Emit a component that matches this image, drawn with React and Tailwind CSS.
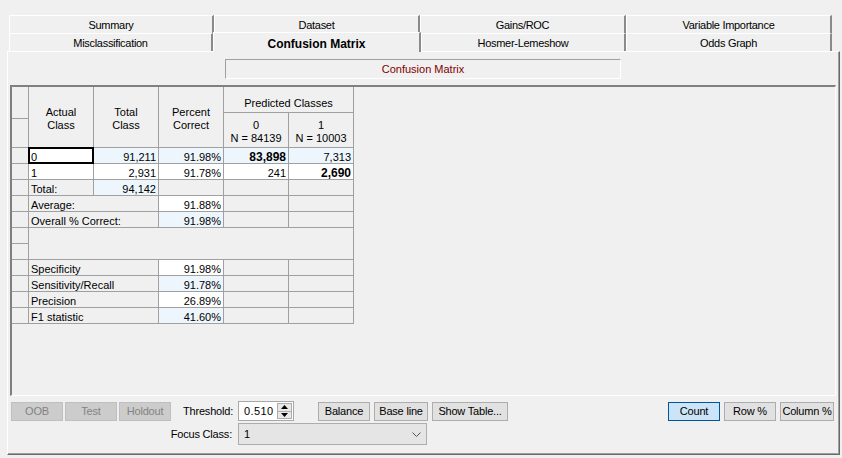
import React from 'react'

const TOP_TABS = [
    { label: 'Summary', w: 'w-[205px]' },
    { label: 'Dataset', w: 'w-[206px]' },
    { label: 'Gains/ROC', w: 'w-[206px]' },
    { label: 'Variable Importance', w: 'w-[206px]' },
]

function Tab({ label, w, active }) {
    return (
        <div
            className={`${w} flex items-center justify-center border-l border-t border-white border-r-2 border-r-[#8a8a8a] pt-[2px] text-[11px] tracking-[-0.3px] text-black ${
                active ? 'relative z-10 -mt-px h-[20px] bg-[#f0f0f0] font-bold tracking-normal text-[12px]' : 'h-[18px]'
            }`}
        >
            {label}
        </div>
    )
}

function Btn({ children, w, disabled, active }) {
    let look = 'bg-[#e1e1e1] border-[#adadad] text-black'
    if (disabled) look = 'bg-[#cccccc] border-[#bfbfbf] text-[#838383]'
    if (active) look = 'bg-[#cce4f7] border-[#005499] text-black'
    return (
        <div className={`${w} flex h-[19px] items-center justify-center border text-[11px] tracking-[-0.2px] ${look}`}>
            {children}
        </div>
    )
}

// grid cell: right + bottom lines, grid container supplies the outer edge
const cell = 'border-r border-b border-[#a0a0a0] flex items-center text-[11px] leading-[13px] overflow-hidden whitespace-nowrap'
const row = 'pt-[4px]'
const num = `${cell} ${row} justify-end pr-[2px]`
const lab = `${cell} ${row} pl-[2px]`
const blue = 'bg-[#eef6fd]'
const white = 'bg-white'

export default function App() {
    return (
        <div className="flex h-[458px] w-[842px] flex-col overflow-hidden bg-[#f0f0f0] font-['Liberation_Sans',Arial,sans-serif] text-black">
            {/* Tabs */}
            <div className="flex pl-[9px] pt-[15px]">
                {TOP_TABS.map(t => (
                    <Tab key={t.label} {...t} />
                ))}
            </div>
            <div className="flex h-[18px] items-start pl-[9px]">
                <Tab label="Misclassification" w="w-[204px]" />
                <Tab label="Confusion Matrix" w="w-[208px]" active />
                <Tab label="Hosmer-Lemeshow" w="w-[205px]" />
                <Tab label="Odds Graph" w="w-[206px]" />
            </div>

            {/* Tab page */}
            <div className="ml-[7px] flex h-[404px] w-[833px] flex-col border-l border-t border-white border-r border-b border-r-[#696969] border-b-[#696969] shadow-[inset_-1px_-1px_0_#a0a0a0]">
                <div className="ml-[217px] mt-[7px] flex h-[20px] w-[396px] items-center justify-center border-l border-t border-l-[#a0a0a0] border-t-[#a0a0a0] border-r border-b border-r-white border-b-white text-[11px] text-[#800000]">
                    Confusion Matrix
                </div>

                {/* Grid */}
                <div className="ml-[2px] mt-[6px] h-[311px] w-[826px] border-l-2 border-t-2 border-l-[#808080] border-t-[#808080] border-r border-b border-r-white border-b-white">
                    <div className="grid grid-cols-[17px_repeat(5,65px)] grid-rows-[26px_6px_29px_repeat(11,16px)] text-black">
                        {/* header */}
                        <div className={`${cell} col-start-1 row-start-1 row-span-2`} />
                        <div className={`${cell} col-start-1 row-start-3`} />
                        <div className={`${cell} col-start-2 row-start-1 row-span-3 justify-center pt-[4px] text-center`}>Actual<br />Class</div>
                        <div className={`${cell} col-start-3 row-start-1 row-span-3 justify-center pt-[4px] text-center`}>Total<br />Class</div>
                        <div className={`${cell} col-start-4 row-start-1 row-span-3 justify-center pt-[4px] text-center`}>Percent<br />Correct</div>
                        <div className={`${cell} col-start-5 col-span-2 row-start-1 justify-center pt-[7px]`}>Predicted Classes</div>
                        <div className={`${cell} col-start-5 row-start-2 row-span-2 justify-center pt-[4px] text-center`}>0<br />N = 84139</div>
                        <div className={`${cell} col-start-6 row-start-2 row-span-2 justify-center pt-[4px] text-center`}>1<br />N = 10003</div>

                        {/* class 0 */}
                        <div className={`${cell} col-start-1 row-start-4`} />
                        <div className="col-start-2 row-start-4 -ml-px -mt-px flex items-center border-2 border-black bg-white pl-[1px] pt-[3px] text-[11px] leading-[13px]">0</div>
                        <div className={`${num} ${blue} col-start-3 row-start-4`}>91,211</div>
                        <div className={`${num} ${blue} col-start-4 row-start-4`}>91.98%</div>
                        <div className={`${num} ${blue} col-start-5 row-start-4 font-bold text-[12px]`}>83,898</div>
                        <div className={`${num} ${blue} col-start-6 row-start-4`}>7,313</div>

                        {/* class 1 */}
                        <div className={`${cell} col-start-1 row-start-5`} />
                        <div className={`${lab} ${white} col-start-2 row-start-5`}>1</div>
                        <div className={`${num} ${white} col-start-3 row-start-5`}>2,931</div>
                        <div className={`${num} ${white} col-start-4 row-start-5`}>91.78%</div>
                        <div className={`${num} ${white} col-start-5 row-start-5`}>241</div>
                        <div className={`${num} ${white} col-start-6 row-start-5 font-bold text-[12px]`}>2,690</div>

                        {/* total */}
                        <div className={`${cell} col-start-1 row-start-6`} />
                        <div className={`${lab} col-start-2 row-start-6`}>Total:</div>
                        <div className={`${num} ${blue} col-start-3 row-start-6`}>94,142</div>
                        <div className={`${cell} col-start-4 row-start-6`} />
                        <div className={`${cell} col-start-5 row-start-6`} />
                        <div className={`${cell} col-start-6 row-start-6`} />

                        {/* average / overall */}
                        <div className={`${cell} col-start-1 row-start-7`} />
                        <div className={`${lab} col-start-2 col-span-2 row-start-7`}>Average:</div>
                        <div className={`${num} ${white} col-start-4 row-start-7`}>91.88%</div>
                        <div className={`${cell} col-start-5 row-start-7`} />
                        <div className={`${cell} col-start-6 row-start-7`} />

                        <div className={`${cell} col-start-1 row-start-8`} />
                        <div className={`${lab} col-start-2 col-span-2 row-start-8`}>Overall % Correct:</div>
                        <div className={`${num} ${blue} col-start-4 row-start-8`}>91.98%</div>
                        <div className={`${cell} col-start-5 row-start-8`} />
                        <div className={`${cell} col-start-6 row-start-8`} />

                        {/* spacer */}
                        <div className={`${cell} col-start-1 row-start-9`} />
                        <div className={`${cell} col-start-1 row-start-10`} />
                        <div className={`${cell} col-start-2 col-span-5 row-start-9 row-span-2`} />

                        {/* stats */}
                        {[
                            ['Specificity', '91.98%', white],
                            ['Sensitivity/Recall', '91.78%', blue],
                            ['Precision', '26.89%', white],
                            ['F1 statistic', '41.60%', blue],
                        ].map(([name, val, bg], i) => (
                            <React.Fragment key={name}>
                                <div className={`${cell} col-start-1`} style={{ gridRowStart: 11 + i }} />
                                <div className={`${lab} col-start-2 col-span-2`} style={{ gridRowStart: 11 + i }}>{name}</div>
                                <div className={`${num} ${bg} col-start-4`} style={{ gridRowStart: 11 + i }}>{val}</div>
                                <div className={`${cell} col-start-5`} style={{ gridRowStart: 11 + i }} />
                                <div className={`${cell} col-start-6`} style={{ gridRowStart: 11 + i }} />
                            </React.Fragment>
                        ))}
                    </div>
                </div>

                {/* Controls row 1 */}
                <div className="mt-[5px] flex h-[20px] items-center pl-[3px] pr-[5px]">
                    <div className="flex gap-[2px]">
                        <Btn w="w-[52px]" disabled>OOB</Btn>
                        <Btn w="w-[52px]" disabled>Test</Btn>
                        <Btn w="w-[52px]" disabled>Holdout</Btn>
                    </div>
                    <div className="w-[62px] text-right text-[11px] tracking-[-0.2px]">Threshold:</div>
                    <div className="ml-[5px] flex h-[20px] w-[56px] items-center border border-[#a8a8a8] bg-white">
                        <span className="flex-1 pl-[5px] text-[11px] tracking-[0.4px]">0.510</span>
                        <div className="mr-[1px] flex h-[16px] w-[15px] flex-col border border-[#adadad] bg-[#e8e8e8]">
                            <div className="flex flex-1 items-center justify-center border-b border-[#adadad]">
                                <svg width="7" height="4" viewBox="0 0 7 4"><path d="M0 4 L3.5 0 L7 4Z" fill="#000" /></svg>
                            </div>
                            <div className="flex flex-1 items-center justify-center">
                                <svg width="7" height="4" viewBox="0 0 7 4"><path d="M0 0 L3.5 4 L7 0Z" fill="#000" /></svg>
                            </div>
                        </div>
                    </div>
                    <div className="ml-[24px] flex gap-[4px]">
                        <Btn w="w-[52px]">Balance</Btn>
                        <Btn w="w-[54px]">Base line</Btn>
                        <Btn w="w-[76px]">Show Table...</Btn>
                    </div>
                    <div className="flex-1" />
                    <div className="flex gap-[4px]">
                        <Btn w="w-[52px]" active>Count</Btn>
                        <Btn w="w-[52px]">Row %</Btn>
                        <Btn w="w-[54px]">Column %</Btn>
                    </div>
                </div>

                {/* Controls row 2 */}
                <div className="mt-[2px] flex h-[22px] items-center">
                    <div className="w-[224px] text-right text-[11px] tracking-[-0.2px]">Focus Class:</div>
                    <div className="ml-[6px] flex h-[22px] w-[189px] items-center border border-[#adadad] bg-[#e5e5e5] pl-[5px] pr-[5px]">
                        <span className="flex-1 text-[11px]">1</span>
                        <svg width="9" height="5" viewBox="0 0 9 5"><path d="M0.5 0.5 L4.5 4.5 L8.5 0.5" fill="none" stroke="#555" strokeWidth="1" /></svg>
                    </div>
                </div>
            </div>
        </div>
    )
}
